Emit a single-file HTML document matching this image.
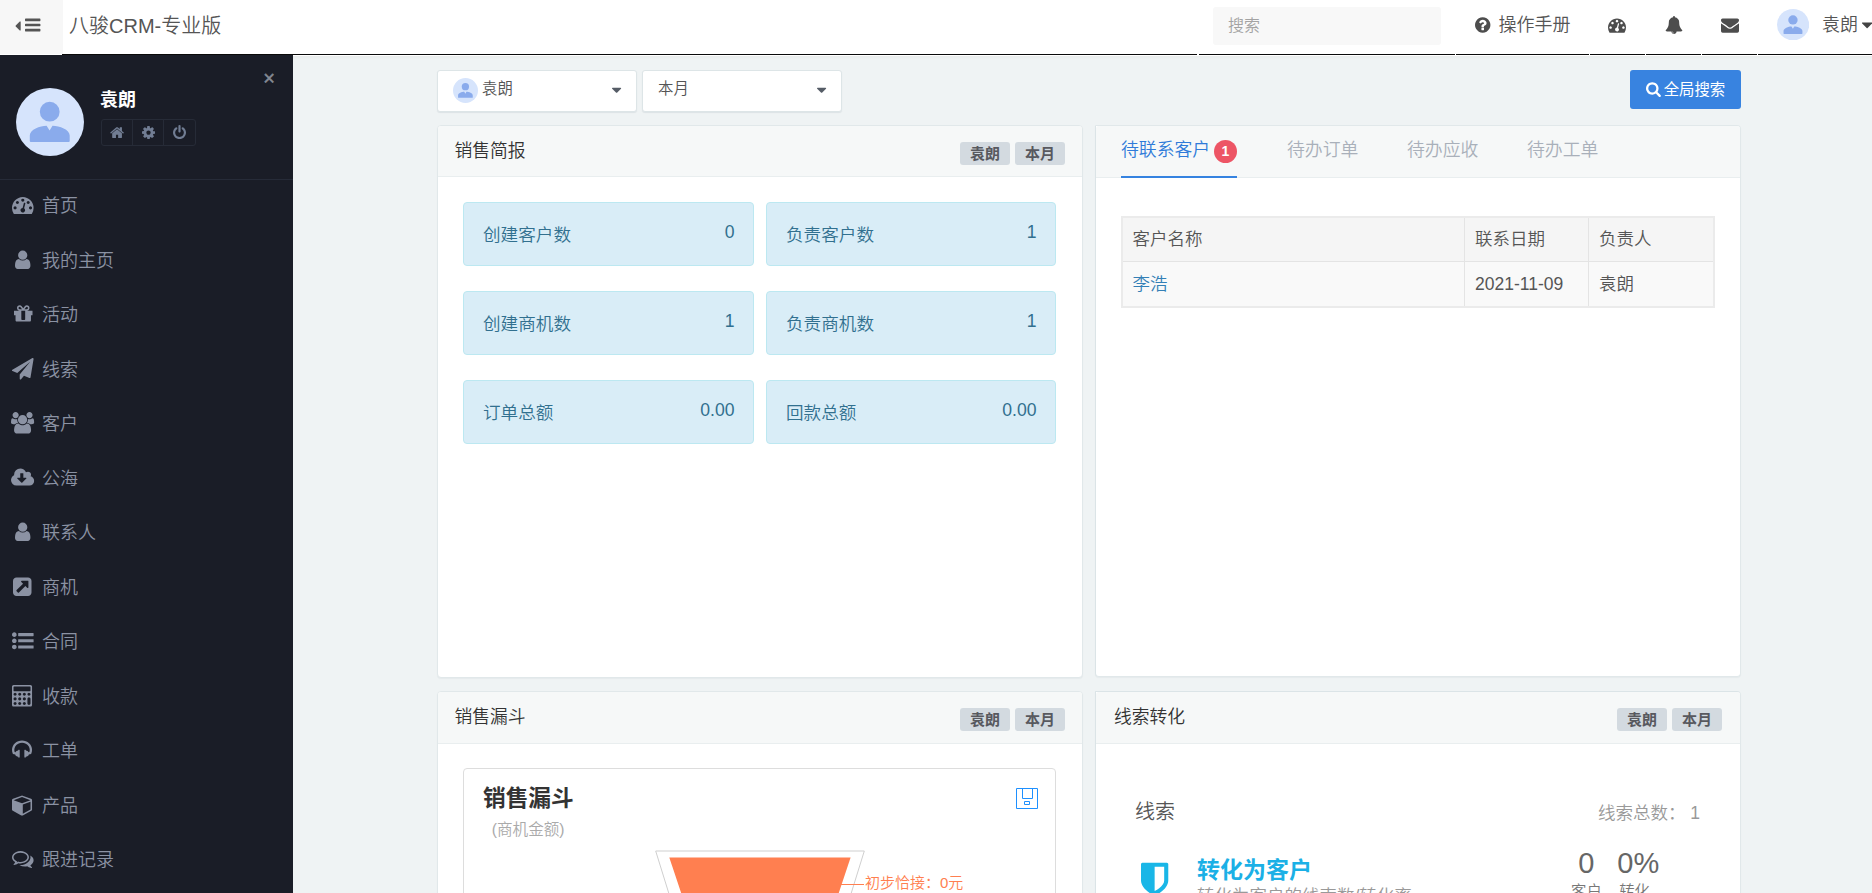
<!DOCTYPE html>
<html lang="zh-CN">
<head>
<meta charset="utf-8">
<title>八骏CRM-专业版</title>
<style>
*{box-sizing:border-box;margin:0;padding:0}
html,body{width:1872px;height:893px;overflow:hidden}
body{font-family:"Liberation Sans","Noto Sans CJK SC",sans-serif;font-size:14px;font-weight:350;color:#555;background:#eff3f4;position:relative}
svg.fa{display:inline-block;vertical-align:middle;overflow:visible}
.abs{position:absolute}
a{text-decoration:none;color:inherit}
ul{list-style:none}

/* ---------- top bar ---------- */
#topbar{position:absolute;left:0;top:0;width:1872px;height:56px;background:#fff}
#shadow{position:absolute;left:293px;top:56px;width:1579px;height:4px;background:linear-gradient(#e9ecec,#eff3f4)}
#toggle{position:absolute;left:0;top:0;width:63px;height:54px;background:#f7f7f7;color:#444}
#brand{position:absolute;left:69px;top:0;height:54px;line-height:52px;font-size:20px;color:#555;white-space:nowrap}
.seg{position:absolute;top:54px;height:1px;background:#0a0a0a}
#search{position:absolute;left:1213px;top:7px;width:228px;height:38px;background:#f8f8f8;border-radius:3px;color:#a3a3a3;font-size:16px;line-height:38px;padding-left:15px}
.nav-item{position:absolute;top:0;height:54px;color:#555;font-size:18px;line-height:50px;white-space:nowrap}

/* ---------- sidebar ---------- */
#sidebar{position:absolute;left:0;top:55px;width:293px;height:838px;background:#1a1d27;color:#8b92a3}
#userbox{position:absolute;left:0;top:0;width:293px;height:125px;border-bottom:1px solid #262b38}
#avatar{position:absolute;left:16px;top:33px;width:68px;height:68px}
#uname{position:absolute;left:100px;top:32px;font-size:18px;font-weight:bold;color:#fff;line-height:26px}
#ubtns{position:absolute;left:101px;top:64px;height:27px;display:flex}
#ubtns span{display:block;width:32.1px;height:27px;border:1px solid #262b37;margin-left:-1px;border-radius:0;color:#717d93;text-align:center;line-height:22px}
#ubtns span:first-child{border-radius:3px 0 0 3px;margin-left:0}
#ubtns span:last-child{border-radius:0 3px 3px 0}
#uclose{position:absolute;left:263.2px;top:9.8px;color:#858a94;font-size:20px;font-weight:400;line-height:26px;-webkit-text-stroke:0.5px #858a94}
#menu{position:absolute;left:0;top:126px;width:292px}
#menu li{position:relative;height:54.5px;font-size:18px;line-height:51px;padding-left:42px;white-space:nowrap}
#menu li svg{position:absolute;top:13px}

/* ---------- content ---------- */
.sel{position:absolute;top:70px;width:200px;height:42px;background:#fff;border:1px solid #dde5e7;border-radius:3px;box-shadow:0 1px 1px rgba(90,110,120,.12);font-size:15.4px;color:#555;line-height:36px}
.panel{position:absolute;background:#fff;border:1px solid #e1e8ea;border-radius:4px;box-shadow:0 1px 1px rgba(90,110,120,.06)}
.phead{position:absolute;left:0;top:0;right:0;height:51px;background:#f6f8f8;border-bottom:1px solid #e9eeef;border-radius:3px 3px 0 0;font-size:17.8px;color:#333;line-height:51px;padding-left:16.5px}
.tag{position:absolute;top:16px;width:50px;height:23px;background:#d3dae0;border-radius:3px;font-size:15px;font-weight:bold;color:#58595f;text-align:center;line-height:24px}
.stat{position:absolute;height:64px;background:#d9edf7;border:1px solid #bce8f1;border-radius:4px;color:#31708f;font-size:17.6px;line-height:65px;padding-left:19px}
.stat b{position:absolute;right:18.5px;top:-3px;font-weight:normal}

#gsearch{position:absolute;left:1630px;top:70px;width:111px;height:39px;background:#3883e0;border-radius:3px;color:#fff;font-size:15.4px;font-weight:400;text-align:center;line-height:39px;white-space:nowrap}
.tab{position:absolute;top:0;height:52px;font-size:17.85px;line-height:49px;color:#a9b0ba;white-space:nowrap}
.tab.on{color:#2f7bd9;border-bottom:2px solid #3583e0}
.tab i{position:absolute;left:93px;top:14px;width:23px;height:23px;border-radius:50%;background:#ed5565;color:#fff;font-style:normal;font-weight:bold;font-size:14px;line-height:23px;text-align:center}
#tbl{position:absolute;left:25px;top:90px;width:594px;height:92px;border:2px solid #ebebeb;font-size:17.5px;color:#555}
#tbl .tr{position:absolute;left:0;width:590px;background:#f9f9f9;line-height:44px}
#tbl .th{background:#f5f5f5;line-height:43px}
#tbl span{position:absolute;top:0;bottom:0;padding-left:10px;border-left:1px solid #e4e4e4;white-space:nowrap}
#tbl span:first-child{border-left:0;padding-left:9.5px}
#chart{position:absolute;left:25px;top:76px;width:593px;height:200px;border:1px solid #ddd;border-radius:4px;background:#fff;overflow:hidden}
.big{position:absolute;top:153px;text-align:center;font-size:29px;color:#666;line-height:36px}
.lbl{position:absolute;top:190.5px;text-align:center;font-size:15.4px;color:#777;line-height:20px}
.av25,.av32{position:absolute}
.av25{left:15px;top:7px;width:25px;height:25px}
.av32{left:0;top:8.8px;width:32.2px;height:31.4px}
</style>
</head>
<body>
<svg width="0" height="0" style="position:absolute"><defs><symbol id="avt" viewBox="0 0 68 68"><circle cx="34" cy="34" r="34" fill="#d6e4fc"/><circle cx="33.7" cy="23.7" r="9.9" fill="#8aabec"/><path fill="#8aabec" d="M13.8 52.9V47.5C13.8 41.5 24 37.7 30.6 37.7L33.6 42.6L36.5 37.7C43.5 37.7 53.7 41.5 53.7 47.5V52.9Q53.7 53.9 52.7 53.9H14.8Q13.8 53.9 13.8 52.9Z"/></symbol></defs></svg>

<div id="topbar">
  <div id="toggle"><svg class="fa" style="width:5.714px;height:16.0px;position:absolute;left:15.3px;top:17.6px" viewBox="0 -1536 640 1792"><path transform="scale(1,-1)" fill="#555" d="M640 1088v-896q0 -26 -19 -45t-45 -19t-45 19l-448 448q-19 19 -19 45t19 45l448 448q19 19 45 19t45 -19t19 -45z"/></svg><svg class="fa" style="width:15.429px;height:18.0px;position:absolute;left:25.3px;top:15.5px" viewBox="0 -1536 1536 1792"><path transform="scale(1,-1)" fill="#555" d="M1536 192v-128q0 -26 -19 -45t-45 -19h-1408q-26 0 -45 19t-19 45v128q0 26 19 45t45 19h1408q26 0 45 -19t19 -45zM1536 704v-128q0 -26 -19 -45t-45 -19h-1408q-26 0 -45 19t-19 45v128q0 26 19 45t45 19h1408q26 0 45 -19t19 -45zM1536 1216v-128q0 -26 -19 -45 t-45 -19h-1408q-26 0 -45 19t-19 45v128q0 26 19 45t45 19h1408q26 0 45 -19t19 -45z"/></svg></div>
  <div id="brand">八骏CRM-专业版</div>
  <div class="seg" style="left:62px;width:1135px"></div>
  <div class="seg" style="left:1199px;width:256px"></div>
  <div class="seg" style="left:1456px;width:133px"></div>
  <div class="seg" style="left:1590px;width:55px"></div>
  <div class="seg" style="left:1646px;width:55px"></div>
  <div class="seg" style="left:1702px;width:55px"></div>
  <div class="seg" style="left:1758px;width:114px"></div>
  <div id="search">搜索</div>
  <div class="nav-item" style="left:1475px"><svg class="fa" style="width:15.429px;height:18.0px;margin-top:-3px" viewBox="0 -1536 1536 1792"><path transform="scale(1,-1)" fill="#4d4d4d" d="M896 160v192q0 14 -9 23t-23 9h-192q-14 0 -23 -9t-9 -23v-192q0 -14 9 -23t23 -9h192q14 0 23 9t9 23zM1152 832q0 88 -55.5 163t-138.5 116t-170 41q-243 0 -371 -213q-15 -24 8 -42l132 -100q7 -6 19 -6q16 0 25 12q53 68 86 92q34 24 86 24q48 0 85.5 -26t37.5 -59 q0 -38 -20 -61t-68 -45q-63 -28 -115.5 -86.5t-52.5 -125.5v-36q0 -14 9 -23t23 -9h192q14 0 23 9t9 23q0 19 21.5 49.5t54.5 49.5q32 18 49 28.5t46 35t44.5 48t28 60.5t12.5 81zM1536 640q0 -209 -103 -385.5t-279.5 -279.5t-385.5 -103t-385.5 103t-279.5 279.5 t-103 385.5t103 385.5t279.5 279.5t385.5 103t385.5 -103t279.5 -279.5t103 -385.5z"/></svg> <span style="margin-left:3px">操作手册</span></div>
  <div class="nav-item" style="left:1608px"><svg class="fa" style="width:18.000px;height:18.0px;margin-top:-3px" viewBox="0 -1536 1792 1792"><path transform="scale(1,-1)" fill="#4d4d4d" d="M384 384q0 53 -37.5 90.5t-90.5 37.5t-90.5 -37.5t-37.5 -90.5t37.5 -90.5t90.5 -37.5t90.5 37.5t37.5 90.5zM576 832q0 53 -37.5 90.5t-90.5 37.5t-90.5 -37.5t-37.5 -90.5t37.5 -90.5t90.5 -37.5t90.5 37.5t37.5 90.5zM1004 351l101 382q6 26 -7.5 48.5t-38.5 29.5 t-48 -6.5t-30 -39.5l-101 -382q-60 -5 -107 -43.5t-63 -98.5q-20 -77 20 -146t117 -89t146 20t89 117q16 60 -6 117t-72 91zM1664 384q0 53 -37.5 90.5t-90.5 37.5t-90.5 -37.5t-37.5 -90.5t37.5 -90.5t90.5 -37.5t90.5 37.5t37.5 90.5zM1024 1024q0 53 -37.5 90.5 t-90.5 37.5t-90.5 -37.5t-37.5 -90.5t37.5 -90.5t90.5 -37.5t90.5 37.5t37.5 90.5zM1472 832q0 53 -37.5 90.5t-90.5 37.5t-90.5 -37.5t-37.5 -90.5t37.5 -90.5t90.5 -37.5t90.5 37.5t37.5 90.5zM1792 384q0 -261 -141 -483q-19 -29 -54 -29h-1402q-35 0 -54 29 q-141 221 -141 483q0 182 71 348t191 286t286 191t348 71t348 -71t286 -191t191 -286t71 -348z"/></svg></div>
  <div class="nav-item" style="left:1665px"><svg class="fa" style="width:18.000px;height:18.0px;margin-top:-3px" viewBox="0 -1536 1792 1792"><path transform="scale(1,-1)" fill="#4d4d4d" d="M912 -160q0 16 -16 16q-59 0 -101.5 42.5t-42.5 101.5q0 16 -16 16t-16 -16q0 -73 51.5 -124.5t124.5 -51.5q16 0 16 16zM1728 128q0 -52 -38 -90t-90 -38h-448q0 -106 -75 -181t-181 -75t-181 75t-75 181h-448q-52 0 -90 38t-38 90q50 42 91 88t85 119.5t74.5 158.5 t50 206t19.5 260q0 152 117 282.5t307 158.5q-8 19 -8 39q0 40 28 68t68 28t68 -28t28 -68q0 -20 -8 -39q190 -28 307 -158.5t117 -282.5q0 -139 19.5 -260t50 -206t74.5 -158.5t85 -119.5t91 -88z"/></svg></div>
  <div class="nav-item" style="left:1721px"><svg class="fa" style="width:18.000px;height:18.0px;margin-top:-3px" viewBox="0 -1536 1792 1792"><path transform="scale(1,-1)" fill="#4d4d4d" d="M1792 826v-794q0 -66 -47 -113t-113 -47h-1472q-66 0 -113 47t-47 113v794q44 -49 101 -87q362 -246 497 -345q57 -42 92.5 -65.5t94.5 -48t110 -24.5h1h1q51 0 110 24.5t94.5 48t92.5 65.5q170 123 498 345q57 39 100 87zM1792 1120q0 -79 -49 -151t-122 -123 q-376 -261 -468 -325q-10 -7 -42.5 -30.5t-54 -38t-52 -32.5t-57.5 -27t-50 -9h-1h-1q-23 0 -50 9t-57.5 27t-52 32.5t-54 38t-42.5 30.5q-91 64 -262 182.5t-205 142.5q-62 42 -117 115.5t-55 136.5q0 78 41.5 130t118.5 52h1472q65 0 112.5 -47t47.5 -113z"/></svg></div>
  <div class="nav-item" style="left:1777px"><svg class="av32" viewBox="0 0 68 68" preserveAspectRatio="none"><use href="#avt" width="68" height="68"/></svg><span style="margin-left:45px">袁朗</span><svg class="fa" style="width:10.286px;height:18.0px;margin-left:4px;margin-top:-3.4px" viewBox="0 -1536 1024 1792"><path transform="scale(1,-1)" fill="#444" d="M1024 832q0 -26 -19 -45l-448 -448q-19 -19 -45 -19t-45 19l-448 448q-19 19 -19 45t19 45t45 19h896q26 0 45 -19t19 -45z"/></svg></div>
</div>

<div id="shadow"></div>
<div id="sidebar">
  <div id="userbox">
    <svg id="avatar"><use href="#avt"/></svg>
    <div id="uname">袁朗</div>
    <div id="ubtns"><span><svg class="fa" style="width:14.114px;height:15.2px;" viewBox="0 -1536 1664 1792"><path transform="scale(1,-1)" fill="currentColor" d="M1408 544v-480q0 -26 -19 -45t-45 -19h-384v384h-256v-384h-384q-26 0 -45 19t-19 45v480q0 1 0.5 3t0.5 3l575 474l575 -474q1 -2 1 -6zM1631 613l-62 -74q-8 -9 -21 -11h-3q-13 0 -21 7l-692 577l-692 -577q-12 -8 -24 -7q-13 2 -21 11l-62 74q-8 10 -7 23.5t11 21.5 l719 599q32 26 76 26t76 -26l244 -204v195q0 14 9 23t23 9h192q14 0 23 -9t9 -23v-408l219 -182q10 -8 11 -21.5t-7 -23.5z"/></svg></span><span><svg class="fa" style="width:13.029px;height:15.2px;" viewBox="0 -1536 1536 1792"><path transform="scale(1,-1)" fill="currentColor" d="M1024 640q0 106 -75 181t-181 75t-181 -75t-75 -181t75 -181t181 -75t181 75t75 181zM1536 749v-222q0 -12 -8 -23t-20 -13l-185 -28q-19 -54 -39 -91q35 -50 107 -138q10 -12 10 -25t-9 -23q-27 -37 -99 -108t-94 -71q-12 0 -26 9l-138 108q-44 -23 -91 -38 q-16 -136 -29 -186q-7 -28 -36 -28h-222q-14 0 -24.5 8.5t-11.5 21.5l-28 184q-49 16 -90 37l-141 -107q-10 -9 -25 -9q-14 0 -25 11q-126 114 -165 168q-7 10 -7 23q0 12 8 23q15 21 51 66.5t54 70.5q-27 50 -41 99l-183 27q-13 2 -21 12.5t-8 23.5v222q0 12 8 23t19 13 l186 28q14 46 39 92q-40 57 -107 138q-10 12 -10 24q0 10 9 23q26 36 98.5 107.5t94.5 71.5q13 0 26 -10l138 -107q44 23 91 38q16 136 29 186q7 28 36 28h222q14 0 24.5 -8.5t11.5 -21.5l28 -184q49 -16 90 -37l142 107q9 9 24 9q13 0 25 -10q129 -119 165 -170q7 -8 7 -22 q0 -12 -8 -23q-15 -21 -51 -66.5t-54 -70.5q26 -50 41 -98l183 -28q13 -2 21 -12.5t8 -23.5z"/></svg></span><span style="width:33.3px"><svg class="fa" style="width:13.029px;height:15.2px;" viewBox="0 -1536 1536 1792"><path transform="scale(1,-1)" fill="currentColor" d="M1536 640q0 -156 -61 -298t-164 -245t-245 -164t-298 -61t-298 61t-245 164t-164 245t-61 298q0 182 80.5 343t226.5 270q43 32 95.5 25t83.5 -50q32 -42 24.5 -94.5t-49.5 -84.5q-98 -74 -151.5 -181t-53.5 -228q0 -104 40.5 -198.5t109.5 -163.5t163.5 -109.5 t198.5 -40.5t198.5 40.5t163.5 109.5t109.5 163.5t40.5 198.5q0 121 -53.5 228t-151.5 181q-42 32 -49.5 84.5t24.5 94.5q31 43 84 50t95 -25q146 -109 226.5 -270t80.5 -343zM896 1408v-640q0 -52 -38 -90t-90 -38t-90 38t-38 90v640q0 52 38 90t90 38t90 -38t38 -90z"/></svg></span></div>
    <div id="uclose">×</div>
  </div>
  <ul id="menu">
    <li><svg class="fa" style="width:21.600px;height:21.6px;left:12px" viewBox="0 -1536 1792 1792"><path transform="scale(1,-1)" fill="currentColor" d="M384 384q0 53 -37.5 90.5t-90.5 37.5t-90.5 -37.5t-37.5 -90.5t37.5 -90.5t90.5 -37.5t90.5 37.5t37.5 90.5zM576 832q0 53 -37.5 90.5t-90.5 37.5t-90.5 -37.5t-37.5 -90.5t37.5 -90.5t90.5 -37.5t90.5 37.5t37.5 90.5zM1004 351l101 382q6 26 -7.5 48.5t-38.5 29.5 t-48 -6.5t-30 -39.5l-101 -382q-60 -5 -107 -43.5t-63 -98.5q-20 -77 20 -146t117 -89t146 20t89 117q16 60 -6 117t-72 91zM1664 384q0 53 -37.5 90.5t-90.5 37.5t-90.5 -37.5t-37.5 -90.5t37.5 -90.5t90.5 -37.5t90.5 37.5t37.5 90.5zM1024 1024q0 53 -37.5 90.5 t-90.5 37.5t-90.5 -37.5t-37.5 -90.5t37.5 -90.5t90.5 -37.5t90.5 37.5t37.5 90.5zM1472 832q0 53 -37.5 90.5t-90.5 37.5t-90.5 -37.5t-37.5 -90.5t37.5 -90.5t90.5 -37.5t90.5 37.5t37.5 90.5zM1792 384q0 -261 -141 -483q-19 -29 -54 -29h-1402q-35 0 -54 29 q-141 221 -141 483q0 182 71 348t191 286t286 191t348 71t348 -71t286 -191t191 -286t71 -348z"/></svg>首页</li>
    <li><svg class="fa" style="width:15.429px;height:21.6px;left:15px" viewBox="0 -1536 1280 1792"><path transform="scale(1,-1)" fill="currentColor" d="M1280 137q0 -109 -62.5 -187t-150.5 -78h-854q-88 0 -150.5 78t-62.5 187q0 85 8.5 160.5t31.5 152t58.5 131t94 89t134.5 34.5q131 -128 313 -128t313 128q76 0 134.5 -34.5t94 -89t58.5 -131t31.5 -152t8.5 -160.5zM1024 1024q0 -159 -112.5 -271.5t-271.5 -112.5 t-271.5 112.5t-112.5 271.5t112.5 271.5t271.5 112.5t271.5 -112.5t112.5 -271.5z"/></svg>我的主页</li>
    <li><svg class="fa" style="width:18.514px;height:21.6px;left:14px" viewBox="0 -1536 1536 1792"><path transform="scale(1,-1)" fill="currentColor" d="M928 180v56v468v192h-320v-192v-468v-56q0 -25 18 -38.5t46 -13.5h192q28 0 46 13.5t18 38.5zM472 1024h195l-126 161q-26 31 -69 31q-40 0 -68 -28t-28 -68t28 -68t68 -28zM1160 1120q0 40 -28 68t-68 28q-43 0 -69 -31l-125 -161h194q40 0 68 28t28 68zM1536 864v-320 q0 -14 -9 -23t-23 -9h-96v-416q0 -40 -28 -68t-68 -28h-1088q-40 0 -68 28t-28 68v416h-96q-14 0 -23 9t-9 23v320q0 14 9 23t23 9h440q-93 0 -158.5 65.5t-65.5 158.5t65.5 158.5t158.5 65.5q107 0 168 -77l128 -165l128 165q61 77 168 77q93 0 158.5 -65.5t65.5 -158.5 t-65.5 -158.5t-158.5 -65.5h440q14 0 23 -9t9 -23z"/></svg>活动</li>
    <li><svg class="fa" style="width:21.600px;height:21.6px;left:12px" viewBox="0 -1536 1792 1792"><path transform="scale(1,-1)" fill="currentColor" d="M1764 1525q33 -24 27 -64l-256 -1536q-5 -29 -32 -45q-14 -8 -31 -8q-11 0 -24 5l-453 185l-242 -295q-18 -23 -49 -23q-13 0 -22 4q-19 7 -30.5 23.5t-11.5 36.5v349l864 1059l-1069 -925l-395 162q-37 14 -40 55q-2 40 32 59l1664 960q15 9 32 9q20 0 36 -11z"/></svg>线索</li>
    <li><svg class="fa" style="width:23.143px;height:21.6px;left:11px" viewBox="0 -1536 1920 1792"><path transform="scale(1,-1)" fill="currentColor" d="M593 640q-162 -5 -265 -128h-134q-82 0 -138 40.5t-56 118.5q0 353 124 353q6 0 43.5 -21t97.5 -42.5t119 -21.5q67 0 133 23q-5 -37 -5 -66q0 -139 81 -256zM1664 3q0 -120 -73 -189.5t-194 -69.5h-874q-121 0 -194 69.5t-73 189.5q0 53 3.5 103.5t14 109t26.5 108.5 t43 97.5t62 81t85.5 53.5t111.5 20q10 0 43 -21.5t73 -48t107 -48t135 -21.5t135 21.5t107 48t73 48t43 21.5q61 0 111.5 -20t85.5 -53.5t62 -81t43 -97.5t26.5 -108.5t14 -109t3.5 -103.5zM640 1280q0 -106 -75 -181t-181 -75t-181 75t-75 181t75 181t181 75t181 -75 t75 -181zM1344 896q0 -159 -112.5 -271.5t-271.5 -112.5t-271.5 112.5t-112.5 271.5t112.5 271.5t271.5 112.5t271.5 -112.5t112.5 -271.5zM1920 671q0 -78 -56 -118.5t-138 -40.5h-134q-103 123 -265 128q81 117 81 256q0 29 -5 66q66 -23 133 -23q59 0 119 21.5t97.5 42.5 t43.5 21q124 0 124 -353zM1792 1280q0 -106 -75 -181t-181 -75t-181 75t-75 181t75 181t181 75t181 -75t75 -181z"/></svg>客户</li>
    <li><svg class="fa" style="width:23.143px;height:21.6px;left:11px" viewBox="0 -1536 1920 1792"><path transform="scale(1,-1)" fill="currentColor" d="M1280 608q0 14 -9 23t-23 9h-224v352q0 13 -9.5 22.5t-22.5 9.5h-192q-13 0 -22.5 -9.5t-9.5 -22.5v-352h-224q-13 0 -22.5 -9.5t-9.5 -22.5q0 -14 9 -23l352 -352q9 -9 23 -9t23 9l351 351q10 12 10 24zM1920 384q0 -159 -112.5 -271.5t-271.5 -112.5h-1088 q-185 0 -316.5 131.5t-131.5 316.5q0 130 70 240t188 165q-2 30 -2 43q0 212 150 362t362 150q156 0 285.5 -87t188.5 -231q71 62 166 62q106 0 181 -75t75 -181q0 -76 -41 -138q130 -31 213.5 -135.5t83.5 -238.5z"/></svg>公海</li>
    <li><svg class="fa" style="width:15.429px;height:21.6px;left:15px" viewBox="0 -1536 1280 1792"><path transform="scale(1,-1)" fill="currentColor" d="M1280 137q0 -109 -62.5 -187t-150.5 -78h-854q-88 0 -150.5 78t-62.5 187q0 85 8.5 160.5t31.5 152t58.5 131t94 89t134.5 34.5q131 -128 313 -128t313 128q76 0 134.5 -34.5t94 -89t58.5 -131t31.5 -152t8.5 -160.5zM1024 1024q0 -159 -112.5 -271.5t-271.5 -112.5 t-271.5 112.5t-112.5 271.5t112.5 271.5t271.5 112.5t271.5 -112.5t112.5 -271.5z"/></svg>联系人</li>
    <li><svg class="fa" style="width:18.514px;height:21.6px;left:13px" viewBox="0 -1536 1536 1792"><path transform="scale(1,-1)" fill="currentColor" d="M1280 608v480q0 26 -19 45t-45 19h-480q-42 0 -59 -39q-17 -41 14 -70l144 -144l-534 -534q-19 -19 -19 -45t19 -45l102 -102q19 -19 45 -19t45 19l534 534l144 -144q18 -19 45 -19q12 0 25 5q39 17 39 59zM1536 1120v-960q0 -119 -84.5 -203.5t-203.5 -84.5h-960 q-119 0 -203.5 84.5t-84.5 203.5v960q0 119 84.5 203.5t203.5 84.5h960q119 0 203.5 -84.5t84.5 -203.5z"/></svg>商机</li>
    <li><svg class="fa" style="width:21.600px;height:21.6px;left:12px" viewBox="0 -1536 1792 1792"><path transform="scale(1,-1)" fill="currentColor" d="M384 128q0 -80 -56 -136t-136 -56t-136 56t-56 136t56 136t136 56t136 -56t56 -136zM384 640q0 -80 -56 -136t-136 -56t-136 56t-56 136t56 136t136 56t136 -56t56 -136zM1792 224v-192q0 -13 -9.5 -22.5t-22.5 -9.5h-1216q-13 0 -22.5 9.5t-9.5 22.5v192q0 13 9.5 22.5 t22.5 9.5h1216q13 0 22.5 -9.5t9.5 -22.5zM384 1152q0 -80 -56 -136t-136 -56t-136 56t-56 136t56 136t136 56t136 -56t56 -136zM1792 736v-192q0 -13 -9.5 -22.5t-22.5 -9.5h-1216q-13 0 -22.5 9.5t-9.5 22.5v192q0 13 9.5 22.5t22.5 9.5h1216q13 0 22.5 -9.5t9.5 -22.5z M1792 1248v-192q0 -13 -9.5 -22.5t-22.5 -9.5h-1216q-13 0 -22.5 9.5t-9.5 22.5v192q0 13 9.5 22.5t22.5 9.5h1216q13 0 22.5 -9.5t9.5 -22.5z"/></svg>合同</li>
    <li><svg class="fa" style="width:21.600px;height:21.6px;left:12px" viewBox="0 -1536 1792 1792"><path transform="scale(1,-1)" fill="currentColor" d="M384 0q0 53 -37.5 90.5t-90.5 37.5t-90.5 -37.5t-37.5 -90.5t37.5 -90.5t90.5 -37.5t90.5 37.5t37.5 90.5zM768 0q0 53 -37.5 90.5t-90.5 37.5t-90.5 -37.5t-37.5 -90.5t37.5 -90.5t90.5 -37.5t90.5 37.5t37.5 90.5zM384 384q0 53 -37.5 90.5t-90.5 37.5t-90.5 -37.5 t-37.5 -90.5t37.5 -90.5t90.5 -37.5t90.5 37.5t37.5 90.5zM1152 0q0 53 -37.5 90.5t-90.5 37.5t-90.5 -37.5t-37.5 -90.5t37.5 -90.5t90.5 -37.5t90.5 37.5t37.5 90.5zM768 384q0 53 -37.5 90.5t-90.5 37.5t-90.5 -37.5t-37.5 -90.5t37.5 -90.5t90.5 -37.5t90.5 37.5 t37.5 90.5zM384 768q0 53 -37.5 90.5t-90.5 37.5t-90.5 -37.5t-37.5 -90.5t37.5 -90.5t90.5 -37.5t90.5 37.5t37.5 90.5zM1152 384q0 53 -37.5 90.5t-90.5 37.5t-90.5 -37.5t-37.5 -90.5t37.5 -90.5t90.5 -37.5t90.5 37.5t37.5 90.5zM768 768q0 53 -37.5 90.5t-90.5 37.5 t-90.5 -37.5t-37.5 -90.5t37.5 -90.5t90.5 -37.5t90.5 37.5t37.5 90.5zM1536 0v384q0 52 -38 90t-90 38t-90 -38t-38 -90v-384q0 -52 38 -90t90 -38t90 38t38 90zM1152 768q0 53 -37.5 90.5t-90.5 37.5t-90.5 -37.5t-37.5 -90.5t37.5 -90.5t90.5 -37.5t90.5 37.5t37.5 90.5z M1536 1088v256q0 26 -19 45t-45 19h-1280q-26 0 -45 -19t-19 -45v-256q0 -26 19 -45t45 -19h1280q26 0 45 19t19 45zM1536 768q0 53 -37.5 90.5t-90.5 37.5t-90.5 -37.5t-37.5 -90.5t37.5 -90.5t90.5 -37.5t90.5 37.5t37.5 90.5zM1664 1408v-1536q0 -52 -38 -90t-90 -38 h-1408q-52 0 -90 38t-38 90v1536q0 52 38 90t90 38h1408q52 0 90 -38t38 -90z"/></svg>收款</li>
    <li><svg class="fa" style="width:20.057px;height:21.6px;left:12px" viewBox="0 -1536 1664 1792"><path transform="scale(1,-1)" fill="currentColor" d="M1664 650q0 -166 -60 -314l-20 -49l-185 -33q-22 -83 -90.5 -136.5t-156.5 -53.5v-32q0 -14 -9 -23t-23 -9h-64q-14 0 -23 9t-9 23v576q0 14 9 23t23 9h64q14 0 23 -9t9 -23v-32q71 0 130 -35.5t93 -95.5l68 12q29 95 29 193q0 148 -88 279t-236.5 209t-315.5 78 t-315.5 -78t-236.5 -209t-88 -279q0 -98 29 -193l68 -12q34 60 93 95.5t130 35.5v32q0 14 9 23t23 9h64q14 0 23 -9t9 -23v-576q0 -14 -9 -23t-23 -9h-64q-14 0 -23 9t-9 23v32q-88 0 -156.5 53.5t-90.5 136.5l-185 33l-20 49q-60 148 -60 314q0 151 67 291t179 242.5 t266 163.5t320 61t320 -61t266 -163.5t179 -242.5t67 -291z"/></svg>工单</li>
    <li><svg class="fa" style="width:21.600px;height:21.6px;left:12px" viewBox="0 -1536 1792 1792"><path transform="scale(1,-1)" fill="currentColor" d="M896 -93l640 349v636l-640 -233v-752zM832 772l698 254l-698 254l-698 -254zM1664 1024v-768q0 -35 -18 -65t-49 -47l-704 -384q-28 -16 -61 -16t-61 16l-704 384q-31 17 -49 47t-18 65v768q0 40 23 73t61 47l704 256q22 8 44 8t44 -8l704 -256q38 -14 61 -47t23 -73z "/></svg>产品</li>
    <li><svg class="fa" style="width:21.600px;height:21.6px;left:12px" viewBox="0 -1536 1792 1792"><path transform="scale(1,-1)" fill="currentColor" d="M704 1152q-153 0 -286 -52t-211.5 -141t-78.5 -191q0 -82 53 -158t149 -132l97 -56l-35 -84q34 20 62 39l44 31l53 -10q78 -14 153 -14q153 0 286 52t211.5 141t78.5 191t-78.5 191t-211.5 141t-286 52zM704 1280q191 0 353.5 -68.5t256.5 -186.5t94 -257t-94 -257 t-256.5 -186.5t-353.5 -68.5q-86 0 -176 16q-124 -88 -278 -128q-36 -9 -86 -16h-3q-11 0 -20.5 8t-11.5 21q-1 3 -1 6.5t0.5 6.5t2 6l2.5 5t3.5 5.5t4 5t4.5 5t4 4.5q5 6 23 25t26 29.5t22.5 29t25 38.5t20.5 44q-124 72 -195 177t-71 224q0 139 94 257t256.5 186.5 t353.5 68.5zM1526 111q10 -24 20.5 -44t25 -38.5t22.5 -29t26 -29.5t23 -25q1 -1 4 -4.5t4.5 -5t4 -5t3.5 -5.5l2.5 -5t2 -6t0.5 -6.5t-1 -6.5q-3 -14 -13 -22t-22 -7q-50 7 -86 16q-154 40 -278 128q-90 -16 -176 -16q-271 0 -472 132q58 -4 88 -4q161 0 309 45t264 129 q125 92 192 212t67 254q0 77 -23 152q129 -71 204 -178t75 -230q0 -120 -71 -224.5t-195 -176.5z"/></svg>跟进记录</li>
  </ul>
</div>


<!-- filter row -->
<div class="sel" style="left:437px"><svg class="av25"><use href="#avt"/></svg><span style="position:absolute;left:44px;top:0">袁朗</span><svg class="fa" style="width:9.143px;height:16.0px;position:absolute;left:173.5px;top:11px" viewBox="0 -1536 1024 1792"><path transform="scale(1,-1)" fill="#555c66" d="M1024 832q0 -26 -19 -45l-448 -448q-19 -19 -45 -19t-45 19l-448 448q-19 19 -19 45t19 45t45 19h896q26 0 45 -19t19 -45z"/></svg></div>
<div class="sel" style="left:642px"><span style="position:absolute;left:15px;top:0">本月</span><svg class="fa" style="width:9.143px;height:16.0px;position:absolute;left:173.5px;top:11px" viewBox="0 -1536 1024 1792"><path transform="scale(1,-1)" fill="#555c66" d="M1024 832q0 -26 -19 -45l-448 -448q-19 -19 -45 -19t-45 19l-448 448q-19 19 -19 45t19 45t45 19h896q26 0 45 -19t19 -45z"/></svg></div>
<div id="gsearch"><svg class="fa" style="width:14.857px;height:16.0px;margin-right:3px;margin-top:-3px" viewBox="0 -1536 1664 1792"><path transform="scale(1,-1)" fill="#fff" d="M1152 704q0 185 -131.5 316.5t-316.5 131.5t-316.5 -131.5t-131.5 -316.5t131.5 -316.5t316.5 -131.5t316.5 131.5t131.5 316.5zM1664 -128q0 -52 -38 -90t-90 -38q-54 0 -90 38l-343 342q-179 -124 -399 -124q-143 0 -273.5 55.5t-225 150t-150 225t-55.5 273.5 t55.5 273.5t150 225t225 150t273.5 55.5t273.5 -55.5t225 -150t150 -225t55.5 -273.5q0 -220 -124 -399l343 -343q37 -37 37 -90z"/></svg>全局搜索</div>

<!-- panel 1 : sales brief -->
<div class="panel" style="left:437px;top:125px;width:646px;height:553px">
  <div class="phead">销售简报</div>
  <div class="tag" style="left:522px">袁朗</div><div class="tag" style="left:577px">本月</div>
  <div class="stat" style="left:25px;top:76px;width:291px">创建客户数<b>0</b></div>
  <div class="stat" style="left:328px;top:76px;width:290px">负责客户数<b>1</b></div>
  <div class="stat" style="left:25px;top:165px;width:291px">创建商机数<b>1</b></div>
  <div class="stat" style="left:328px;top:165px;width:290px">负责商机数<b>1</b></div>
  <div class="stat" style="left:25px;top:254px;width:291px">订单总额<b>0.00</b></div>
  <div class="stat" style="left:328px;top:254px;width:290px">回款总额<b>0.00</b></div>
</div>

<!-- panel 2 : todo tabs -->
<div class="panel" style="left:1095px;top:125px;width:646px;height:552px;border-top-left-radius:1px;border-left-color:#dbe4e7">
  <div class="phead" style="height:52px"></div>
  <div class="tab on" style="left:25px;width:116px">待联系客户<i>1</i></div>
  <div class="tab" style="left:191px">待办订单</div>
  <div class="tab" style="left:311px">待办应收</div>
  <div class="tab" style="left:431px">待办工单</div>
  <div id="tbl">
    <div class="tr th" style="top:0;height:43px"><span style="left:0;width:341px">客户名称</span><span style="left:341px;width:124px">联系日期</span><span style="left:465px;width:125px">负责人</span></div>
    <div class="tr" style="top:43px;height:45px;border-top:1px solid #e4e4e4"><span style="left:0;width:341px;color:#3480b6">李浩</span><span style="left:341px;width:124px">2021-11-09</span><span style="left:465px;width:125px">袁朗</span></div>
  </div>
</div>

<!-- panel 3 : funnel -->
<div class="panel" style="left:437px;top:691px;width:646px;height:260px">
  <div class="phead" style="height:52px">销售漏斗</div>
  <div class="tag" style="left:522px">袁朗</div><div class="tag" style="left:577px">本月</div>
  <div id="chart">
    <div style="position:absolute;left:19px;top:12px;font-size:22.7px;font-weight:bold;color:#333;line-height:34px">销售漏斗</div>
    <div style="position:absolute;left:27.8px;top:51px;font-size:15.6px;color:#aaa;line-height:20px">(商机金额)</div>
    <svg style="position:absolute;left:0;top:0" width="591" height="130" viewBox="0 0 591 130">
      <g fill="none" stroke="#1e90ff" stroke-width="1"><path d="M552.5 19.5h21v20h-21z"/><path d="M558.5 19.5v10h10v-10"/><path d="M560.5 32.5h5v3h-5z"/></g>
      <path d="M191.7 82h208.6l-15.2 49h-178.2z" fill="none" stroke="#cfcfcf" stroke-width="1"/>
      <path d="M205.3 88.5h181.3l-14.2 42.5h-152.9z" fill="#ff7f50"/>
      <path d="M377 115.5h23" stroke="#ff7f50" stroke-width="1"/>
      <text x="401" y="119.3" font-size="15" fill="#ff7f50" font-family="Liberation Sans,Noto Sans CJK SC,sans-serif">初步恰接：0元</text>
    </svg>
  </div>
</div>

<!-- panel 4 : lead conversion -->
<div class="panel" style="left:1095px;top:690.5px;width:646px;height:260px;border-top-left-radius:1px;border-left-color:#dbe4e7;border-top-color:#dbe4e7">
  <div class="phead" style="padding-left:18px;height:52.5px">线索转化</div>
  <div class="tag" style="left:521px">袁朗</div><div class="tag" style="left:576px">本月</div>
  <div style="position:absolute;left:39px;top:105px;font-size:20px;color:#555;line-height:30px">线索</div>
  <div style="position:absolute;right:40px;top:107px;font-size:17.5px;color:#999;line-height:28px;white-space:pre">线索总数： 1</div>
  <svg class="fa" style="width:27.286px;height:38.2px;position:absolute;left:44.75px;top:168.9px" viewBox="0 -1536 1280 1792"><path transform="scale(1,-1)" fill="#19b6e7" d="M1088 576v640h-448v-1137q119 63 213 137q235 184 235 360zM1280 1344v-768q0 -86 -33.5 -170.5t-83 -150t-118 -127.5t-126.5 -103t-121 -77.5t-89.5 -49.5t-42.5 -20q-12 -6 -26 -6t-26 6q-16 7 -42.5 20t-89.5 49.5t-121 77.5t-126.5 103t-118 127.5t-83 150 t-33.5 170.5v768q0 26 19 45t45 19h1152q26 0 45 -19t19 -45z"/></svg>
  <div style="position:absolute;left:101px;top:161px;font-size:23px;font-weight:bold;color:#1bb0e6;line-height:34px">转化为客户</div>
  <div style="position:absolute;left:101px;top:190px;font-size:17.5px;color:#999;line-height:28px;white-space:nowrap">转化为客户的线索数/转化率</div>
  <div class="big" style="left:460.3px;width:60px">0</div><div class="lbl" style="left:460.4px;width:60px">客户</div>
  <div class="big" style="left:512.3px;width:60px">0%</div><div class="lbl" style="left:508.6px;width:60px">转化</div>
</div>


</body>
</html>
